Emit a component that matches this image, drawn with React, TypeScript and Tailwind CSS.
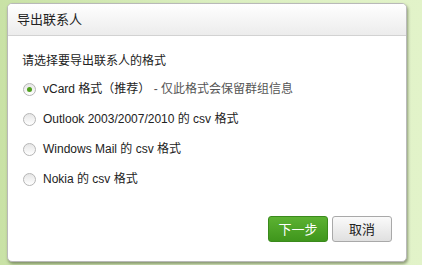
import React from 'react';

const options = [
  { label: 'vCard 格式（推荐）', note: ' - 仅此格式会保留群组信息', checked: true },
  { label: 'Outlook 2003/2007/2010 的 csv 格式' },
  { label: 'Windows Mail 的 csv 格式' },
  { label: 'Nokia 的 csv 格式' },
];

const Radio: React.FC<{ checked?: boolean }> = ({ checked }) => (
  <span className="w-[13px] h-[13px] rounded-full border border-[#b5b5b5] bg-gradient-to-b from-[#e6e6e6] to-white flex items-center justify-center shrink-0">
    {checked && <span className="w-[5px] h-[5px] rounded-full bg-[#4fa01d]" />}
  </span>
);

export default function App() {
  return (
    <div
      className="w-[422px] h-[265px] bg-gradient-to-r from-[#c9e2a6] via-[#dbefc0] to-[#e2f3c9] pl-[7px] pt-[3px] overflow-hidden"
      style={{ fontFamily: '"Liberation Sans", "Noto Sans CJK SC", sans-serif' }}
    >
      <div className="w-[400px] h-[259px] bg-white rounded-[5px] border border-[#b9b9b9] shadow-[1px_2px_3px_rgba(70,80,50,0.55)] flex flex-col overflow-hidden">
        <div className="h-[32px] shrink-0 bg-gradient-to-b from-white to-[#ececec] border-b border-[#d2d2d2] flex items-center pl-[9px] text-[13px] text-[#222]">
          导出联系人
        </div>
        <div className="flex-1 pl-[14px] pt-[15px] text-[12px] text-[#222]">
          <div className="leading-[20px]">请选择要导出联系人的格式</div>
          <div className="mt-[8px] flex flex-col gap-[10px]">
            {options.map((o, i) => (
              <div key={i} className="flex items-center h-[20px] pl-[1px]">
                <Radio checked={o.checked} />
                <span className="ml-[7px] text-[#222]">
                  {o.label}
                  {o.note && <span className="text-[#555]">{o.note}</span>}
                </span>
              </div>
            ))}
          </div>
        </div>
        <div className="h-[45px] shrink-0 flex items-start justify-end gap-[4px] pr-[14px]">
          <button className="w-[60px] h-[26px] rounded-[3px] border border-[#3a8a1c] bg-gradient-to-b from-[#5cb232] to-[#3f961c] text-white text-[13px] leading-none">
            下一步
          </button>
          <button className="w-[60px] h-[26px] rounded-[3px] border border-[#a9a9a9] bg-gradient-to-b from-[#fafafa] to-[#e0e0e0] text-[#222] text-[13px] leading-none">
            取消
          </button>
        </div>
      </div>
    </div>
  );
}
